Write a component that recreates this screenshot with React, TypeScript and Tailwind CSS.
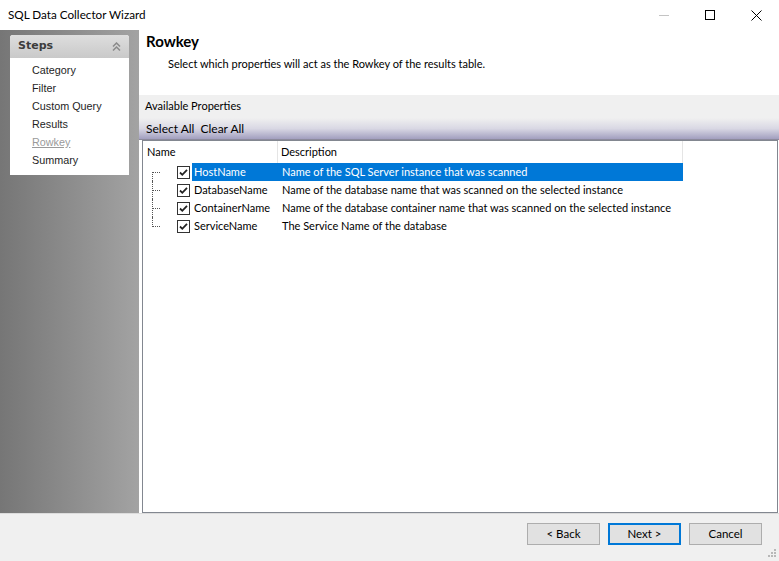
import React from "react";

const props = [
    { name: "HostName", desc: "Name of the SQL Server instance that was scanned" },
    { name: "DatabaseName", desc: "Name of the database name that was scanned on the selected instance" },
    { name: "ContainerName", desc: "Name of the database container name that was scanned on the selected instance" },
    { name: "ServiceName", desc: "The Service Name of the database" },
];

const steps = ["Category", "Filter", "Custom Query", "Results", "Rowkey", "Summary"];

function CheckBox() {
    return (
        <svg width="13" height="13" viewBox="0 0 13 13" className="shrink-0">
            <rect x="0.5" y="0.5" width="12" height="12" fill="#fff" stroke="#333" />
            <path d="M3 6.5 L5.3 8.8 L10 3.8" fill="none" stroke="#222" strokeWidth="1.8" />
        </svg>
    );
}

function TreeLines({ index, count }: { index: number; count: number }) {
    const first = index === 0;
    const last = index === count - 1;
    return (
        <div className="relative h-full w-[34px] shrink-0">
            <div
                className={`absolute left-[9px] w-0 border-l border-dotted border-[#555] ${
                    first ? "top-[9px] bottom-0" : last ? "top-0 h-[10px]" : "top-0 bottom-0"
                }`}
            />
            <div className="absolute left-[10px] top-[9px] h-0 w-[7px] border-t border-dotted border-[#555]" />
        </div>
    );
}

export default function App() {
    return (
        <div
            className="flex h-[561px] w-[779px] flex-col overflow-hidden bg-white text-[11px] text-black"
            style={{ fontFamily: "Lato, 'Liberation Sans', sans-serif" }}
        >
            {/* title bar */}
            <div className="flex h-[30px] shrink-0 items-center bg-white">
                <span className="pl-[8px] text-[11.7px]">SQL Data Collector Wizard</span>
                <div className="ml-auto flex h-full">
                    <div className="flex w-[46px] items-center justify-center">
                        <div className="h-px w-[10px] bg-[#c4c4c4]" />
                    </div>
                    <div className="flex w-[46px] items-center justify-center">
                        <div className="h-[10px] w-[10px] border border-black" />
                    </div>
                    <div className="flex w-[46px] items-center justify-center">
                        <svg width="11" height="11" viewBox="0 0 11 11">
                            <path d="M0.5 0.5 L10.5 10.5 M10.5 0.5 L0.5 10.5" stroke="#000" strokeWidth="1" />
                        </svg>
                    </div>
                </div>
            </div>

            {/* body */}
            <div className="flex h-[483px] shrink-0">
                <div className="w-[139px] shrink-0 bg-gradient-to-r from-[#767676] to-[#a3a3a3] px-[10px] pt-[5px]">
                    <div className="overflow-hidden rounded-t-[3px] bg-white">
                        <div className="flex h-[23px] items-center justify-between bg-gradient-to-b from-[#dedede] to-[#c9c9c9] pl-[8px] pr-[8px]">
                            <span
                                className="font-bold text-[#3c3c3c]"
                                style={{ fontFamily: "'DejaVu Sans', sans-serif", fontSize: 11 }}
                            >
                                Steps
                            </span>
                            <svg width="9" height="10" viewBox="0 0 9 10">
                                <path d="M1 4.5 L4.5 1 L8 4.5 M1 8.5 L4.5 5 L8 8.5" fill="none" stroke="#8a8a8a" strokeWidth="1.5" />
                            </svg>
                        </div>
                        <div className="flex flex-col pb-[6px] pt-[3px]">
                            {steps.map((s) => (
                                <div
                                    key={s}
                                    className={`flex h-[18px] items-center pl-[22px] ${
                                        s === "Rowkey" ? "text-[#9a9a9a] underline" : "text-[#1e1e1e]"
                                    }`}
                                    style={{ fontFamily: "'Liberation Sans', sans-serif", fontSize: 10.8 }}
                                >
                                    {s}
                                </div>
                            ))}
                        </div>
                    </div>
                </div>

                <div className="flex w-[640px] flex-col">
                    <div className="h-[65px] shrink-0 bg-white pl-[7px] pt-[1px]">
                        <div className="text-[15px] font-bold leading-[20px]">Rowkey</div>
                        <div className="mt-[5px] pl-[22px] text-[11px] leading-[16px]">
                            Select which properties will act as the Rowkey of the results table.
                        </div>
                    </div>
                    <div className="flex h-[23px] shrink-0 items-center bg-[#f0f0f0] pb-[1px] pl-[6px] text-[11px]">
                        Available Properties
                    </div>
                    <div className="flex h-[22px] shrink-0 items-center gap-[6px] border-b border-[#8c8a9c] bg-gradient-to-b from-[#f0f0f0] via-[#d9d8e4] to-[#a29fbf] pl-[7px] pt-[1px] text-[12px]">
                        <span>Select All</span>
                        <span>Clear All</span>
                    </div>
                    <div className="ml-[3px] mr-[1px] flex-1 border border-[#828790] bg-white">
                        <div className="flex h-[22px] items-center">
                            <div className="flex h-full w-[135px] items-center border-r border-[#e5e5e5] pl-[4px]">Name</div>
                            <div className="flex h-full w-[405px] items-center border-r border-[#e5e5e5] pl-[3px]">
                                Description
                            </div>
                        </div>
                        {props.map((p, i) => {
                            const sel = i === 0;
                            return (
                                <div key={p.name} className="flex h-[18px] items-center">
                                    <TreeLines index={i} count={props.length} />
                                    <CheckBox />
                                    <div
                                        className={`ml-[2px] flex h-full w-[491px] items-center ${
                                            sel ? "bg-[#0078d7] text-white" : ""
                                        }`}
                                    >
                                        <span className="w-[87px] shrink-0 pl-[2px]">{p.name}</span>
                                        <span className="whitespace-nowrap pl-[3px]">{p.desc}</span>
                                    </div>
                                </div>
                            );
                        })}
                    </div>
                </div>
            </div>

            {/* footer */}
            <div className="relative flex flex-1 items-start justify-end gap-[8px] border-t border-[#dcdcdc] bg-[#f0f0f0] pr-[17px] pt-[9px] text-[11.5px]">
                <button className="h-[22px] w-[73px] border border-[#adadad] bg-[#e1e1e1]">&lt; Back</button>
                <button className="h-[22px] w-[73px] border-2 border-[#0078d7] bg-[#e1e1e1]">Next &gt;</button>
                <button className="h-[22px] w-[73px] border border-[#adadad] bg-[#e1e1e1]">Cancel</button>
                <svg className="absolute bottom-[3px] right-[2px]" width="10" height="10" viewBox="0 0 10 10">
                    <g fill="#b8b8b8">
                        <rect x="7" y="1" width="2" height="2" />
                        <rect x="4" y="4" width="2" height="2" />
                        <rect x="7" y="4" width="2" height="2" />
                        <rect x="1" y="7" width="2" height="2" />
                        <rect x="4" y="7" width="2" height="2" />
                        <rect x="7" y="7" width="2" height="2" />
                    </g>
                </svg>
            </div>
        </div>
    );
}
